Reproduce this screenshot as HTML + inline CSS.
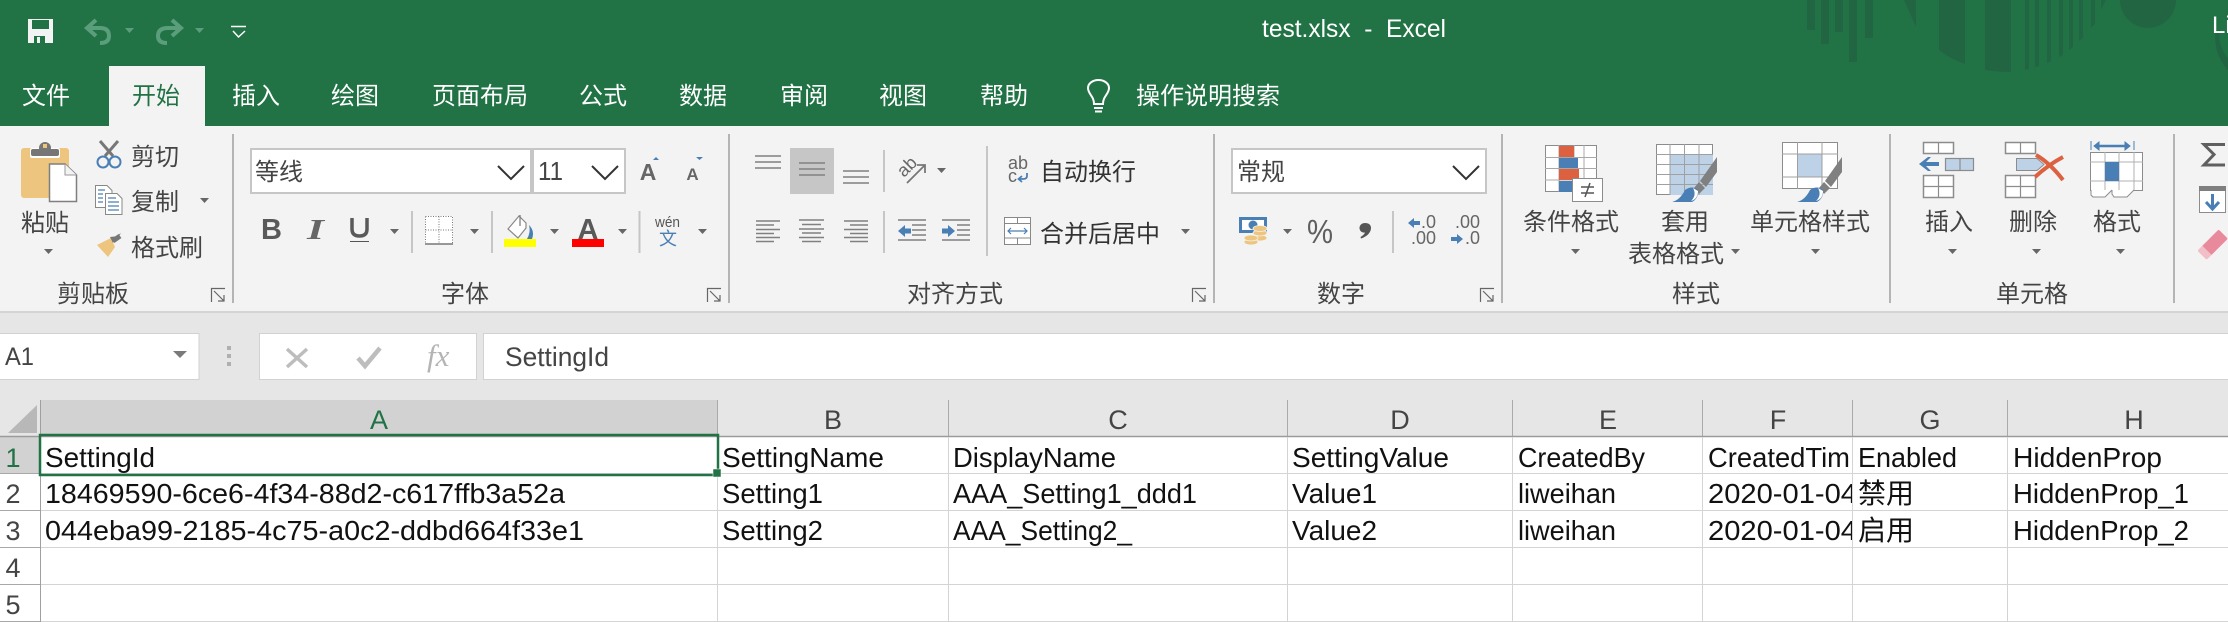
<!DOCTYPE html>
<html><head><meta charset="utf-8"><style>
html,body{margin:0;padding:0;background:#fff;width:2228px;height:622px;overflow:hidden}
svg{display:block}
text{font-family:"Liberation Sans","Noto Sans CJK SC",sans-serif;white-space:pre}
.c{font-size:24px;fill:#444}
.w{font-size:24px;fill:#fff}
.g{font-size:28px;fill:#111}
.h{font-size:27px;fill:#444;text-anchor:middle}
.l{stroke:#808080;stroke-width:1.4;fill:none}
.ln{stroke:#8c8c8c;stroke-width:1.5;fill:#fff}
.gl{stroke:#d4d4d4;stroke-width:1}
.sp{stroke:#c6c6c6;stroke-width:2}
.gs{stroke:#b4b4b4;stroke-width:2}
.dec{fill:#226543}
</style></head><body>
<svg width="2228" height="622" viewBox="0 0 2228 622" xmlns="http://www.w3.org/2000/svg">
<defs><polygon id="t" points="0,0 9,0 4.5,5" fill="#666"/></defs>
<rect width="2228" height="622" fill="#fff"/>
<rect width="2228" height="126" fill="#217346"/>
<!-- decoration -->
<g class="dec">
<rect x="1807" y="0" width="8" height="30"/><rect x="1821" y="0" width="8" height="44"/><rect x="1835" y="0" width="8" height="32"/><rect x="1849" y="0" width="8" height="62"/><rect x="1865" y="0" width="8" height="38"/>
<polygon points="1904,0 1916,0 1916,27"/>
<path d="M1939 0H1965V64Q1950 59 1939 50Z"/>
<path d="M1985 0H2011V72Q1997 72 1985 70Z"/>
<polygon points="2025,0 2029,0 2029,69 2025,70"/><polygon points="2035,0 2039,0 2039,66 2035,67"/><polygon points="2047,0 2051,0 2051,61 2047,63"/><polygon points="2059,0 2063,0 2063,55 2059,57"/><polygon points="2069,0 2073,0 2073,47 2069,50"/><polygon points="2079,0 2083,0 2083,38 2079,41"/><polygon points="2091,0 2095,0 2095,24 2091,28"/><polygon points="2101,0 2106,0 2101,10"/>
<path d="M2120 0H2176A28 28 0 0 1 2120 0Z"/>
<path d="M2216 30A45 45 0 0 0 2228 70V58A32 32 0 0 1 2220 30Z"/>
</g>
<!-- QAT -->
<path d="M28 19H53V43H28ZM32 20V29H49V20ZM34 36V43H45V36ZM37 37H40V43H37Z" fill="#f3f3f3" fill-rule="evenodd"/>
<g fill="none" stroke="#5a9e7c" stroke-width="4">
<path d="M96 20L87 28L96 36M87 28H100Q109 28 109 36Q109 43 100 43"/>
<path d="M172 20L181 28L172 36M181 28H168Q158 28 158 36Q158 43 167 43"/></g>
<polygon points="125,28 134,28 129.5,33" fill="#5a9e7c"/><polygon points="195,28 204,28 199.5,33" fill="#5a9e7c"/>
<path d="M231 26.5H246" stroke="#fff" stroke-width="1.5"/><path d="M233 31L238.500 37L245 31" stroke="#fff" stroke-width="1.5" fill="none"/>
<text x="1262" y="37" style="font-size:25px" fill="#fff" textLength="184" lengthAdjust="spacingAndGlyphs">test.xlsx  -  Excel</text>
<text x="2212" y="33" style="font-size:24px" fill="#fff">Li</text>
<!-- tabs -->
<rect y="126" width="2228" height="186" fill="#f3f3f3"/>
<rect x="109" y="66" width="96" height="60" fill="#f3f3f3"/>
<text class="w" x="22" y="104">文件</text>
<text x="132" y="104" style="font-size:24px" fill="#217346">开始</text>
<text class="w" x="232" y="104">插入</text>
<text class="w" x="331" y="104">绘图</text>
<text class="w" x="432" y="104">页面布局</text>
<text class="w" x="579" y="104">公式</text>
<text class="w" x="679" y="104">数据</text>
<text class="w" x="780" y="104">审阅</text>
<text class="w" x="879" y="104">视图</text>
<text class="w" x="980" y="104">帮助</text>
<path d="M1094 104C1094 96 1088 94 1088 88A10.500 8 0 0 1 1109 88C1109 94 1103 96 1103 104ZM1094 108H1103M1095 111.500H1102" fill="none" stroke="#fff" stroke-width="2"/>
<text class="w" x="1136" y="104">操作说明搜索</text>
<!-- group separators -->
<g class="gs"><path d="M233 134V303M729 134V303M1214 134V303M1502 134V303M1890 134V303M2174 134V303"/></g>
<!-- group labels -->
<text class="c" x="57" y="302">剪贴板</text>
<text class="c" x="441" y="302">字体</text>
<text class="c" x="907" y="302">对齐方式</text>
<text class="c" x="1317" y="302">数字</text>
<text class="c" x="1672" y="302">样式</text>
<text class="c" x="1996" y="302">单元格</text>
<g fill="none" stroke="#666" stroke-width="1.2">
<path d="M225 288.500H211.500V302M214 291L224 301M224 295V301H218"/>
<path d="M721 288.500H707.500V302M710 291L720 301M720 295V301H714"/>
<path d="M1206 288.500H1192.500V302M1195 291L1205 301M1205 295V301H1199"/>
<path d="M1494 288.500H1480.500V302M1483 291L1493 301M1493 295V301H1487"/>
</g>
<!-- clipboard -->
<rect x="21" y="148" width="48" height="50" rx="3" fill="#edc57f"/>
<rect x="30" y="148" width="30" height="10" rx="2" fill="#fff"/>
<rect x="31" y="149" width="28" height="7" rx="2" fill="#767676"/><circle cx="45" cy="148" r="6" fill="#767676"/><rect x="43" y="144" width="4" height="4" fill="#edc57f"/>
<path d="M49.500 164H65L76.500 175V201.500H49.500Z" fill="#fff" stroke="#7f7f7f" stroke-width="1.500"/><path d="M65 164V175H76.500" fill="#f3f3f3" stroke="#999" stroke-width="1"/>
<text class="c" x="21" y="231">粘贴</text><use href="#t" x="44" y="249"/>
<!-- scissors -->
<g fill="none"><path d="M105 156L118 141M113 156L100 141" stroke="#777" stroke-width="3"/><circle cx="103" cy="162" r="5.500" stroke="#4a7fb5" stroke-width="2"/><circle cx="115" cy="162" r="5.500" stroke="#4a7fb5" stroke-width="2"/></g>
<text class="c" x="131" y="165">剪切</text>
<!-- copy -->
<path d="M95.500 185.500H107L112 190.500V207.500H95.500Z" fill="#fff" stroke="#888"/><path d="M105.500 193.500H117L122 198.500V214.500H105.500Z" fill="#fff" stroke="#888"/>
<path d="M98 190H105M98 194H103M98 198H103M98 202H103M108 198H116M108 202H119M108 206H119M108 210H119" stroke="#4a7fb5" stroke-width="1.200"/>
<text class="c" x="131" y="210">复制</text><use href="#t" x="200" y="198"/>
<!-- painter -->
<polygon points="97,245 111,238 115,247 108,257" fill="#edc57f"/><polygon points="110,237 119,236 121,233 118,235 113,243" fill="#777"/><path d="M113 241L120 236" stroke="#777" stroke-width="5"/>
<text class="c" x="131" y="256">格式刷</text>
<!-- font -->
<rect x="250" y="148" width="376" height="46" fill="#c6c6c6"/><rect x="252" y="150" width="278" height="42" fill="#fff"/><rect x="534" y="150" width="90" height="42" fill="#fff"/>
<text class="c" x="255" y="180">等线</text>
<text x="538" y="180" style="font-size:26px" fill="#444" textLength="25" lengthAdjust="spacingAndGlyphs">11</text>
<path d="M498 166L511 179L524 166M592 166L605 179L618 166" fill="none" stroke="#333" stroke-width="2"/>
<text x="648" y="180" style="font-size:23px;font-weight:700;text-anchor:middle" fill="#666">A</text><polygon points="653,160 659,160 656,157" fill="#4a7fb5"/>
<text x="692.500" y="180" style="font-size:17px;font-weight:700;text-anchor:middle" fill="#666">A</text><polygon points="696,157 703,157 699.500,160" fill="#4a7fb5"/>
<text x="261" y="239" style="font-size:29px;font-weight:700" fill="#595959">B</text>
<text x="307" y="239" style="font-family:'Liberation Serif',serif;font-size:29px;font-style:italic;font-weight:700" fill="#666" textLength="17" lengthAdjust="spacingAndGlyphs">I</text>
<path d="M352 218V229Q352 236 359.500 236Q367 236 367 229V218" fill="none" stroke="#595959" stroke-width="3.500"/><path d="M350 241.500H369" stroke="#555" stroke-width="1"/>
<use href="#t" x="390" y="229"/>
<path class="sp" d="M412 211V253M492 211V253M639.500 211V253"/>
<rect x="425" y="216" width="28" height="28" fill="#fff"/>
<path d="M425.500 216.500H452.500V243.500M425.500 216.500V243.500M439 216.500V243.500M425.500 230H452.500" fill="none" stroke="#777" stroke-dasharray="1 1.500"/><path d="M425 244H453" stroke="#777" stroke-width="1.500"/>
<use href="#t" x="470" y="229"/>
<path d="M519 216L526 223V228L518 238L508 229Z" fill="#fff" stroke="#888" stroke-width="1.200"/><path d="M520 215V226" stroke="#777" stroke-width="1.200"/><path d="M529 225Q535 231 532 239H527Q531 232 529 225Z" fill="#4a7fb5"/>
<rect x="504" y="239" width="32" height="8" fill="#ff0"/>
<use href="#t" x="550" y="229"/>
<text x="588" y="239" style="font-size:29px;font-weight:700;text-anchor:middle" fill="#595959">A</text>
<rect x="572" y="239" width="32" height="8" fill="#f00"/>
<use href="#t" x="618" y="229"/>
<text x="655" y="227" style="font-size:15px" fill="#555" textLength="25" lengthAdjust="spacingAndGlyphs">wén</text>
<text x="659" y="245" style="font-size:18px" fill="#4a7fb5">文</text>
<use href="#t" x="698" y="229"/>
<!-- align -->
<rect x="790" y="148" width="44" height="46" fill="#c6c6c6"/>
<g class="l">
<path d="M755 156H781M755 162H781M755 168H781"/><path d="M799 163H825M799 169H825M799 175H825"/><path d="M843 171H869M843 177H869M843 183H869"/>
<path d="M756 221H780M756 225H774M756 229.500H780M756 233.500H774M756 237.500H780M756 241.500H774"/>
<path d="M799 220H824M802 224.500H821M799 229H824M802 233H821M799 237.500H824M802 241.500H821"/>
<path d="M844 221H868M850 225H868M844 229.500H868M850 233.500H868M844 237.500H868M850 241.500H868"/>
<path d="M898 220H926M912 225H926M912 230H926M912 235H926M898 240H926"/>
<path d="M942 220H970M957 225H970M957 230H970M957 235H970M942 240H970"/>
</g>
<path class="sp" d="M884 150V192M884 211V253M987 146V256"/>
<text transform="translate(904 178) rotate(-45)" style="font-size:18px" fill="#666">ab</text>
<path d="M907 183L925 165M917 165H925V173" fill="none" stroke="#777" stroke-width="1.800"/>
<use href="#t" x="937" y="168"/>
<path d="M898 231L905 225V228.500H911V233.500H905V237Z" fill="#4a7fb5"/><path d="M955 231L948 225V228.500H942V233.500H948V237Z" fill="#4a7fb5"/>
<text x="1008" y="169" style="font-size:18px" fill="#666">ab</text><text x="1008" y="182" style="font-size:18px" fill="#666">c</text>
<path d="M1027 173V176Q1027 179 1023 179H1019M1022 176L1018.500 179L1022 182" fill="none" stroke="#4a7fb5" stroke-width="1.800"/>
<text class="c" x="1040" y="180" style="fill:#333">自动换行</text>
<rect x="1004.500" y="217.500" width="26" height="27" fill="#fff" stroke="#888"/><path d="M1004 223.500H1031M1004 238H1031M1017.500 217V223M1017.500 238V244" stroke="#888" stroke-width="1"/>
<path d="M1008 231H1027M1011 228L1008 231L1011 234M1024 228L1027 231L1024 234" fill="none" stroke="#4a7fb5" stroke-width="1.200"/>
<text class="c" x="1040" y="242" style="fill:#333">合并后居中</text><use href="#t" x="1181" y="229"/>
<!-- number -->
<rect x="1231" y="148" width="256" height="46" fill="#c6c6c6"/><rect x="1233" y="150" width="252" height="42" fill="#fff"/>
<text class="c" x="1237" y="180">常规</text>
<path d="M1453 166L1466 179L1479 166" fill="none" stroke="#333" stroke-width="2"/>
<rect x="1239" y="217" width="28" height="16" fill="#4a7fb5"/><rect x="1242" y="220" width="22" height="10" fill="#fff"/><circle cx="1253" cy="225" r="4.500" fill="#4a7fb5"/>
<g fill="#edc57f" stroke="#f3f3f3" stroke-width="0.800"><ellipse cx="1260" cy="238" rx="7" ry="3"/><ellipse cx="1260" cy="233" rx="7" ry="3"/><ellipse cx="1260" cy="228.500" rx="7" ry="3"/><ellipse cx="1251" cy="242" rx="7" ry="3"/><ellipse cx="1251" cy="238" rx="7" ry="3"/></g>
<use href="#t" x="1283" y="229"/>
<text x="1307" y="243" style="font-size:33px" fill="#5e5e5e" textLength="26" lengthAdjust="spacingAndGlyphs">%</text>
<path d="M1365 223C1369 223 1371 225 1371 228C1371 233 1366 237 1361 238.500L1360.500 237C1363 235.500 1364.500 234 1365 232.500C1361.500 233 1359.500 230.500 1359.500 228C1359.500 225 1362 223 1365 223Z" fill="#555"/>
<path class="sp" d="M1393 211V253"/>
<g fill="#666"><text x="1421" y="228" style="font-size:18px">.0</text><text x="1411" y="244" style="font-size:18px">.00</text><text x="1455" y="228" style="font-size:18px">.00</text><text x="1465" y="244" style="font-size:18px">.0</text></g>
<path d="M1408 223L1414 218V221H1420V225H1414V228Z" fill="#4a7fb5"/><path d="M1463 239L1457 234V237H1451V241H1457V244Z" fill="#4a7fb5"/>
<!-- conditional -->
<rect x="1545.500" y="145.500" width="51" height="46" fill="#fff" stroke="#8c8c8c"/>
<path d="M1545 157.500H1597M1545 168.500H1597M1545 180H1597M1559 145V192M1574 145V192M1584 145V192" stroke="#a8a8a8" stroke-width="1"/>
<rect x="1559" y="146" width="15" height="11" fill="#dc6141"/><rect x="1559" y="158" width="19" height="10" fill="#4a7fb5"/><rect x="1559" y="169" width="20" height="11" fill="#dc6141"/><rect x="1559" y="181" width="13" height="11" fill="#4a7fb5"/>
<rect x="1572.500" y="178.500" width="30" height="23" fill="#fff" stroke="#8c8c8c"/>
<path d="M1581 187H1594M1581 193H1594M1590 183L1585 197" stroke="#555" stroke-width="1.500"/>
<text class="c" x="1523" y="230">条件格式</text><use href="#t" x="1571" y="249"/>
<!-- table -->
<rect x="1656.500" y="144.500" width="56" height="50" fill="#fff" stroke="#8c8c8c"/><rect x="1670" y="154" width="43" height="41" fill="#bdd1e7"/>
<path d="M1656 154.500H1713M1656 164.500H1713M1656 174.500H1713M1656 184.500H1713M1670 144V195M1684.500 144V195M1699 144V195" stroke="#a0a0a0" stroke-width="1"/>
<polygon points="1717,157 1717,172 1706,187 1700,181" fill="#808080"/><polygon points="1699,182 1705,188 1699,194 1694,188" fill="#808080"/>
<path d="M1672 202Q1680 200 1685 190Q1692 185 1698 190Q1699 198 1692 202Z" fill="#4a7fb5"/><path d="M1693 188Q1697 195 1691 201Q1698 199 1698 191Z" fill="#fff"/>
<text class="c" x="1661" y="230">套用</text><text class="c" x="1628" y="262">表格格式</text><use href="#t" x="1731" y="249"/>
<!-- cell styles -->
<rect x="1782.500" y="142.500" width="55" height="46" fill="#fff" stroke="#8c8c8c"/><rect x="1798" y="154" width="24" height="23" fill="#bdd1e7"/>
<path d="M1782 154H1838M1782 177H1838M1797.500 142V189M1822 142V189" stroke="#a0a0a0" stroke-width="1"/>
<polygon points="1842,157 1842,172 1831,187 1825,181" fill="#808080"/><polygon points="1824,182 1830,188 1824,194 1819,188" fill="#808080"/>
<path d="M1797 202Q1805 200 1810 190Q1817 185 1823 190Q1824 198 1817 202Z" fill="#4a7fb5"/><path d="M1818 188Q1822 195 1816 201Q1823 199 1823 191Z" fill="#fff"/>
<text class="c" x="1750" y="230">单元格样式</text><use href="#t" x="1811" y="249"/>
<!-- insert -->
<g class="ln"><rect x="1923.500" y="142.500" width="30" height="11"/><rect x="1923.500" y="175.500" width="30" height="22"/></g>
<path d="M1938.500 142V153M1938.500 175V197M1923 186.500H1953" stroke="#8c8c8c" stroke-width="1.200"/>
<rect x="1945.500" y="158.500" width="28" height="12" fill="#bdd1e7" stroke="#8c8c8c" stroke-width="1.200"/><path d="M1960 158V171" stroke="#8c8c8c" stroke-width="1.200"/>
<path d="M1919 164L1928 157H1931L1926 162H1939V166H1926L1931 171H1928Z" fill="#4a7fb5"/>
<text class="c" x="1925" y="230">插入</text><use href="#t" x="1948" y="249"/>
<!-- delete -->
<g class="ln"><rect x="2005.500" y="142.500" width="30" height="11"/><rect x="2005.500" y="175.500" width="30" height="22"/></g>
<path d="M2020.500 142V153M2020.500 175V197M2005 186.500H2035" stroke="#8c8c8c" stroke-width="1.200"/>
<path d="M2016.500 158.500H2037L2044 164.500L2037 170.500H2016.500Z" fill="#bdd1e7" stroke="#8c8c8c" stroke-width="1"/>
<path d="M2036 155Q2050 163 2063 180M2063 157Q2048 165 2035 177" fill="none" stroke="#dc6141" stroke-width="4"/>
<text class="c" x="2009" y="230">删除</text><use href="#t" x="2032" y="249"/>
<!-- format -->
<path d="M2091 141V150M2134 141V150" stroke="#4a7fb5" stroke-width="1"/>
<path d="M2095 146H2129" stroke="#4a7fb5" stroke-width="2.500"/><path d="M2099 142L2094 146L2099 150ZM2125 142L2130 146L2125 150Z" fill="#4a7fb5" stroke="#4a7fb5"/>
<rect x="2090.500" y="152.500" width="52" height="38" fill="#fff" stroke="#8c8c8c"/>
<path d="M2105 152V190M2119 152V190M2134 152V190M2090 162H2143M2090 181H2143" stroke="#b0b0b0" stroke-width="1"/>
<rect x="2105" y="162" width="14" height="19" fill="#4a7fb5"/>
<path d="M2091 190V195L2093 197H2105L2112 190M2112 190V194L2114 197H2127L2134 190" fill="#fff" stroke="#8c8c8c" stroke-width="1"/>
<text class="c" x="2093" y="230">格式</text><use href="#t" x="2116" y="249"/>
<!-- right edge -->
<path d="M2225 144.500H2204L2214 154.500L2204 165H2225" fill="none" stroke="#5f5f5f" stroke-width="3"/>
<rect x="2199.500" y="186.500" width="26" height="26" fill="#fff" stroke="#8c8c8c"/><rect x="2199" y="186" width="27" height="5" fill="#7f7f7f"/>
<path d="M2212.500 194V208M2206 202L2212.500 209L2219 202" fill="none" stroke="#4a7fb5" stroke-width="3"/>
<g transform="rotate(-45 2213 245)"><rect x="2198" y="238" width="30" height="13" rx="1.500" fill="#e88a9c"/><rect x="2198" y="238" width="7" height="13" fill="#fff" opacity=".45"/></g>
<!-- ribbon bottom line + formula -->
<rect y="311" width="2228" height="2" fill="#d4d4d4"/>
<rect y="313" width="2228" height="124" fill="#e6e6e6"/>
<rect x="-2" y="333.500" width="201" height="46" fill="#fff" stroke="#d2d2d2" stroke-width="1"/>
<text x="5" y="365" style="font-size:25px" fill="#444" textLength="29" lengthAdjust="spacingAndGlyphs">A1</text>
<polygon points="173,351 187,351 180,358" fill="#7a7a7a"/>
<rect x="227" y="346" width="4" height="4" fill="#b0b0b0"/><rect x="227" y="354" width="4" height="4" fill="#b0b0b0"/><rect x="227" y="362" width="4" height="4" fill="#b0b0b0"/>
<rect x="259.500" y="333.500" width="217" height="46" fill="#fff" stroke="#d2d2d2" stroke-width="1"/>
<path d="M287 349L307 367M307 349L287 367" stroke="#bdbdbd" stroke-width="3.500"/>
<path d="M358 358L365 366L380 348" fill="none" stroke="#bdbdbd" stroke-width="4.500"/>
<text x="427" y="366" style="font-family:'Liberation Serif',serif;font-size:31px;font-style:italic" fill="#b4b4b4">fx</text>
<rect x="483.500" y="333.500" width="1760" height="46" fill="#fff" stroke="#d2d2d2" stroke-width="1"/>
<text x="505" y="366" style="font-size:27px" fill="#444" textLength="104" lengthAdjust="spacingAndGlyphs">SettingId</text>
<!-- grid headers -->
<rect x="41" y="400" width="676" height="36" fill="#d2d2d2"/>
<polygon points="37,405 37,433 8,433" fill="#b8b8b8"/>
<rect x="0" y="437" width="40" height="36" fill="#d2d2d2"/>
<path d="M717.500 400V436M948.500 400V436M1287.500 400V436M1512.500 400V436M1702.500 400V436M1852.500 400V436M2007.500 400V436" stroke="#aaa" stroke-width="1"/>
<path d="M0 436.500H2228" stroke="#9b9b9b" stroke-width="1.500"/>
<g class="gl">
<path d="M41 473.500H2228M41 510.500H2228M41 547.500H2228M41 584.500H2228M41 621.500H2228"/>
<path d="M717.500 437V622M948.500 437V622M1287.500 437V622M1512.500 437V622M1702.500 437V622M1852.500 437V622M2007.500 437V622"/>
</g>
<path d="M0 473.500H40M0 510.500H40M0 547.500H40M0 584.500H40M0 621.500H40" stroke="#a8a8a8" stroke-width="1"/>
<path d="M40.500 400V622" stroke="#a0a0a0" stroke-width="1"/>
<text class="h" x="379" y="429" style="fill:#217346">A</text>
<text class="h" x="833" y="429">B</text><text class="h" x="1118" y="429">C</text><text class="h" x="1400" y="429">D</text><text class="h" x="1608" y="429">E</text><text class="h" x="1778" y="429">F</text><text class="h" x="1930" y="429">G</text><text class="h" x="2134" y="429">H</text>
<text class="h" x="13" y="467" style="fill:#217346">1</text><text class="h" x="13" y="503">2</text><text class="h" x="13" y="540">3</text><text class="h" x="13" y="577">4</text><text class="h" x="13" y="614">5</text>
<!-- cells -->
<text class="g" x="45" y="467" textLength="110" lengthAdjust="spacingAndGlyphs">SettingId</text>
<text class="g" x="45" y="503" textLength="520" lengthAdjust="spacingAndGlyphs">18469590-6ce6-4f34-88d2-c617ffb3a52a</text>
<text class="g" x="45" y="540" textLength="539" lengthAdjust="spacingAndGlyphs">044eba99-2185-4c75-a0c2-ddbd664f33e1</text>
<text class="g" x="722" y="467" textLength="162" lengthAdjust="spacingAndGlyphs">SettingName</text>
<text class="g" x="722" y="503" textLength="101" lengthAdjust="spacingAndGlyphs">Setting1</text>
<text class="g" x="722" y="540" textLength="101" lengthAdjust="spacingAndGlyphs">Setting2</text>
<text class="g" x="953" y="467" textLength="163" lengthAdjust="spacingAndGlyphs">DisplayName</text>
<text class="g" x="953" y="503" textLength="244" lengthAdjust="spacingAndGlyphs">AAA_Setting1_ddd1</text>
<text class="g" x="953" y="540" textLength="179" lengthAdjust="spacingAndGlyphs">AAA_Setting2_</text>
<text class="g" x="1292" y="467" textLength="157" lengthAdjust="spacingAndGlyphs">SettingValue</text>
<text class="g" x="1292" y="503" textLength="85" lengthAdjust="spacingAndGlyphs">Value1</text>
<text class="g" x="1292" y="540" textLength="85" lengthAdjust="spacingAndGlyphs">Value2</text>
<text class="g" x="1518" y="467" textLength="127" lengthAdjust="spacingAndGlyphs">CreatedBy</text>
<text class="g" x="1518" y="503" textLength="98" lengthAdjust="spacingAndGlyphs">liweihan</text>
<text class="g" x="1518" y="540" textLength="98" lengthAdjust="spacingAndGlyphs">liweihan</text>
<clipPath id="cf"><rect x="1703" y="437" width="149" height="120"/></clipPath>
<g clip-path="url(#cf)">
<text class="g" x="1708" y="467" textLength="142" lengthAdjust="spacingAndGlyphs">CreatedTim</text>
<text class="g" x="1708" y="503" textLength="149" lengthAdjust="spacingAndGlyphs">2020-01-04</text>
<text class="g" x="1708" y="540" textLength="149" lengthAdjust="spacingAndGlyphs">2020-01-04</text>
</g>
<text class="g" x="1858" y="467" textLength="99" lengthAdjust="spacingAndGlyphs">Enabled</text>
<text class="g" x="1858" y="503">禁用</text>
<text class="g" x="1858" y="540">启用</text>
<text class="g" x="2013" y="467" textLength="149" lengthAdjust="spacingAndGlyphs">HiddenProp</text>
<text class="g" x="2013" y="503" textLength="176" lengthAdjust="spacingAndGlyphs">HiddenProp_1</text>
<text class="g" x="2013" y="540" textLength="176" lengthAdjust="spacingAndGlyphs">HiddenProp_2</text>
<!-- selection -->
<rect x="40" y="435" width="678" height="40" fill="none" stroke="#217346" stroke-width="2.500"/>
<rect x="713" y="469" width="8" height="8" fill="#217346" stroke="#fff" stroke-width="0.500"/>
</svg>
</body></html>
